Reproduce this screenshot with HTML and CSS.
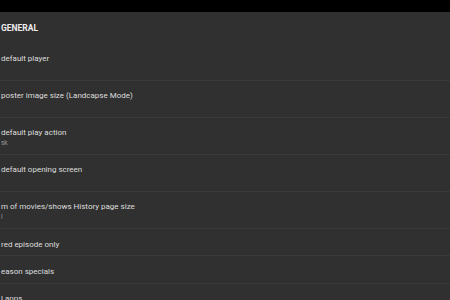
FILE: index.html
```html
<!DOCTYPE html>
<html>
<head>
	<title>Settings</title>
	<link rel="stylesheet" href="styles.css">
</head>
<body>
	<div class="topbar"></div>
	<div class="list">
		<div class="section">GENERAL</div>
		<div class="item">
			<div class="title">default player</div>
			<div class="sub">&nbsp;</div>
		</div>
		<div class="item">
			<div class="title">poster image size (Landcapse Mode)</div>
			<div class="sub">&nbsp;</div>
		</div>
		<div class="item">
			<div class="title">default play action</div>
			<div class="sub">sk</div>
		</div>
		<div class="item">
			<div class="title">default opening screen</div>
			<div class="sub">&nbsp;</div>
		</div>
		<div class="item">
			<div class="title">m of movies/shows History page size</div>
			<div class="sub">l</div>
		</div>
		<div class="item short">
			<div class="title">red episode only</div>
		</div>
		<div class="item short">
			<div class="title">eason specials</div>
		</div>
		<div class="item short">
			<div class="title">l apps</div>
		</div>
	</div>
</body>
</html>
```
FILE: styles.css
```css
* {
	padding: 0px;
	margin: 0px;
}

body {
	background-color: #303030;
	font-family: Roboto, "Liberation Sans", sans-serif;
	overflow: hidden;
}

.topbar {
	height: 12px;
	background-color: #000000;
}

.list {
	background-color: #303030;
}

.section {
	height: 32px;
	line-height: 33px;
	padding-left: 1px;
	font-size: 8.5px;
	font-weight: bold;
	color: #ececec;
}

.item {
	padding: 9.4px 0px 5.6px 1px;
	border-bottom: 1.6px solid #3a3a3a;
}

.item.short {
	padding: 9.6px 0px 5.8px 1px;
}

.title {
	font-size: 8px;
	line-height: 11px;
	color: #dedede;
}

.sub {
	font-size: 6.5px;
	line-height: 10px;
	color: #9a9a9a;
}
```
